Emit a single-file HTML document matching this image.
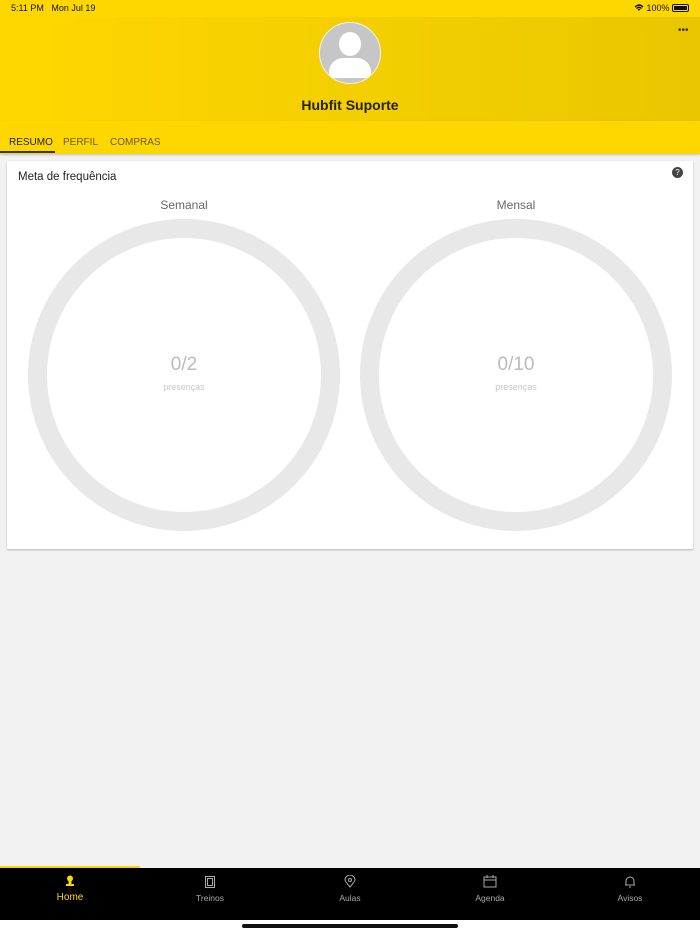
<!DOCTYPE html>
<html><head><meta charset="utf-8"><style>
*{margin:0;padding:0;box-sizing:border-box}
body{width:700px;height:934px;background:#f2f2f2;font-family:"Liberation Sans",sans-serif;position:relative;overflow:hidden}
.status{position:absolute;top:0;left:0;width:700px;height:17px;background:#ffd700;font-size:9px;color:#111}
.hdr{position:absolute;top:17px;left:0;width:700px;height:104px;background:linear-gradient(90deg,#ffd700,#e9c600)}
.tabs{position:absolute;top:121px;left:0;width:700px;height:33px;background:#ffd700;box-shadow:0 1px 2px rgba(0,0,0,.2)}
.tab{position:absolute;top:10px;font-size:10px;color:#6b5b00}
.card{position:absolute;left:7px;top:161px;width:686px;height:388px;background:#fff;box-shadow:0 1px 2px rgba(0,0,0,.25)}
.ring{position:absolute;width:312px;height:312px;border-radius:50%;border:19px solid #e8e8e8}
.big{position:absolute;width:312px;text-align:center;font-size:19px;color:#bbb}
.small{position:absolute;width:312px;text-align:center;font-size:9px;color:#c8c8c8}
.lab{position:absolute;width:312px;text-align:center;font-size:12px;color:#666}
.nav{position:absolute;top:868px;left:0;width:700px;height:52px;background:#000}
.ni{position:absolute;top:0;width:140px;text-align:center;font-size:8.5px;color:#aaa}
.ni svg{display:block;margin:7px auto 5px}
</style></head><body>
<div class="status"><span style="position:absolute;left:11px;top:3px">5:11 PM&nbsp;&nbsp;&nbsp;Mon Jul 19</span>
<span style="position:absolute;left:634px;top:3px;font-size:9px">
<svg width="10" height="8" viewBox="0 0 10 8" style="vertical-align:-1px"><path d="M1 3Q5 -1 9 3M2.5 4.5Q5 2 7.5 4.5M4 6Q5 5 6 6" stroke="#111" stroke-width="1.3" fill="none"/></svg> 100%</span>
<span style="position:absolute;left:672px;top:4px;width:17px;height:8px;border:1px solid #111;border-radius:2px;padding:1px"><span style="display:block;width:100%;height:100%;background:#111"></span></span></div>
<div class="hdr">
<div style="position:absolute;left:319px;top:5px;width:62px;height:62px;border-radius:50%;background:#c6c6c6;border:1.5px solid #f4f4f4;overflow:hidden">
<div style="position:absolute;left:19px;top:9px;width:22px;height:24px;border-radius:50%;background:#fff"></div>
<div style="position:absolute;left:9px;top:35px;width:42px;height:20px;border-radius:14px 14px 2px 2px;background:#fff"></div></div>
<div style="position:absolute;top:80px;width:700px;text-align:center;font-size:14px;font-weight:bold;color:#222">Hubfit Suporte</div>
<div style="position:absolute;left:678px;top:8px;font-size:10px;color:#333">•••</div>
</div>
<div class="tabs">
<span class="tab" style="left:9px;top:16px;color:#222">RESUMO</span>
<span class="tab" style="left:63px;top:16px">PERFIL</span>
<span class="tab" style="left:110px;top:16px">COMPRAS</span>
<div style="position:absolute;left:0;top:30px;width:55px;height:2px;background:#333"></div>
</div>
<div class="card">
<div style="position:absolute;left:11px;top:10px;font-size:11.5px;color:#222">Meta de frequência</div>
<div style="position:absolute;left:665px;top:6px;width:11px;height:11px;border-radius:50%;background:#444;color:#fff;font-size:8px;text-align:center;line-height:11px">?</div>
<div class="lab" style="left:21px;top:37px">Semanal</div>
<div class="lab" style="left:353px;top:37px">Mensal</div>
<div class="ring" style="left:21px;top:58px"></div>
<div class="ring" style="left:353px;top:58px"></div>
<div class="big" style="left:21px;top:193px">0/2</div>
<div class="big" style="left:353px;top:193px">0/10</div>
<div class="small" style="left:21px;top:221px">presenças</div>
<div class="small" style="left:353px;top:221px">presenças</div>
</div>
<div style="position:absolute;top:866px;left:0;width:140px;height:2px;background:#ffd700"></div>
<div class="nav">
<div class="ni" style="left:0;color:#ffd700;font-size:10px"><svg width="12" height="12" viewBox="0 0 12 12"><circle cx="6" cy="3.5" r="3" fill="#ffd700"/><rect x="4.5" y="5" width="3" height="4" fill="#ffd700"/><rect x="2" y="9" width="8" height="2" fill="#ffd700"/></svg>Home</div>
<div class="ni" style="left:140px"><svg width="12" height="13" viewBox="0 0 12 13"><rect x="1.5" y="1.5" width="9" height="11" fill="none" stroke="#aaa"/><rect x="3.5" y="3.5" width="5" height="7" fill="none" stroke="#aaa"/></svg>Treinos</div>
<div class="ni" style="left:280px"><svg width="12" height="13" viewBox="0 0 12 13"><path d="M6 12Q1 6 1 5A5 5 0 0 1 11 5Q11 6 6 12Z" fill="none" stroke="#aaa"/><circle cx="6" cy="5" r="1.5" fill="none" stroke="#aaa"/></svg>Aulas</div>
<div class="ni" style="left:420px"><svg width="14" height="13" viewBox="0 0 14 13"><rect x="1" y="2" width="12" height="10" fill="none" stroke="#aaa"/><path d="M1 5H13M4 0V3M10 0V3" stroke="#aaa"/></svg>Agenda</div>
<div class="ni" style="left:560px"><svg width="12" height="13" viewBox="0 0 12 13"><path d="M2 10V6A4 4 0 0 1 10 6V10H2ZM1 10H11M5 12H7" fill="none" stroke="#aaa"/></svg>Avisos</div>
</div>
<div style="position:absolute;top:920px;left:0;width:700px;height:14px;background:#fff"></div>
<div style="position:absolute;left:242px;top:924px;width:216px;height:4px;border-radius:2px;background:#111"></div>
</body></html>
